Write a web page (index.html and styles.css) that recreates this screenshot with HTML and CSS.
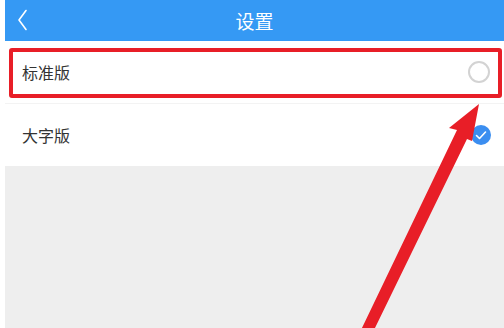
FILE: index.html
```html
<!DOCTYPE html>
<html lang="zh">
<head>
<meta charset="utf-8">
<link rel="stylesheet" href="styles.css">
</head>
<body>
<div class="page">
  <header class="topbar">
    <svg class="back" width="14" height="22" viewBox="0 0 14 22"><polyline points="9,1.5 2,11 9,20.5" fill="none" stroke="#fff" stroke-width="1.6" stroke-linecap="round" stroke-linejoin="round"/></svg>
    <h1 class="title">设置</h1>
  </header>
  <div class="list">
    <div class="row">
      <span class="label">标准版</span>
      <span class="radio"></span>
    </div>
    <div class="row">
      <span class="label">大字版</span>
      <svg class="check" width="22" height="22" viewBox="0 0 22 22"><circle cx="11" cy="11" r="10" fill="#3b8ef0"/><polyline points="6.5,11.5 9.5,14.5 15.5,8" fill="none" stroke="#fff" stroke-width="1.6" stroke-linecap="round" stroke-linejoin="round"/></svg>
    </div>
  </div>
  <div class="filler"></div>
</div>
<div class="highlight"></div>
<svg class="arrow" width="504" height="328" viewBox="0 0 504 328"><polygon points="479,104 472,141 467,139 374,330 361,330 457,130 449,128" fill="#e81e27"/></svg>
</body>
</html>
```
FILE: styles.css
```css
html, body {
  margin: 0;
  padding: 0;
  background: #ffffff;
  width: 504px;
  height: 328px;
  overflow: hidden;
  font-family: "Noto Sans CJK SC", "Noto Sans", sans-serif;
}
.page {
  margin-left: 5px;
  height: 328px;
  display: flex;
  flex-direction: column;
}
.topbar {
  height: 41px;
  background: #3599f4;
  display: flex;
  align-items: center;
  justify-content: center;
  position: relative;
  flex: none;
}
.back {
  position: absolute;
  left: 12px;
  top: 9px;
}
.title {
  margin: 0;
  color: #ffffff;
  font-size: 19px;
  font-weight: 400;
  line-height: 1;
}
.list {
  background: #ffffff;
  flex: none;
}
.row {
  height: 62px;
  display: flex;
  align-items: center;
  justify-content: space-between;
  padding: 0 14px 0 17px;
  border-bottom: 1px solid #f3f3f3;
}
.row:last-child {
  border-bottom: none;
}
.label {
  font-size: 16px;
  color: #333333;
  line-height: 1;
}
.radio {
  width: 18px;
  height: 18px;
  border: 2px solid #d3d3d3;
  border-radius: 50%;
}
.check {
  margin-right: -2px;
}
.filler {
  flex: 1;
  background: #eeeeee;
}
.highlight {
  position: absolute;
  left: 9px;
  top: 48px;
  width: 485px;
  height: 42px;
  border: 4px solid #e81e27;
  border-radius: 3px;
}
.arrow {
  position: absolute;
  left: 0;
  top: 0;
}
```
